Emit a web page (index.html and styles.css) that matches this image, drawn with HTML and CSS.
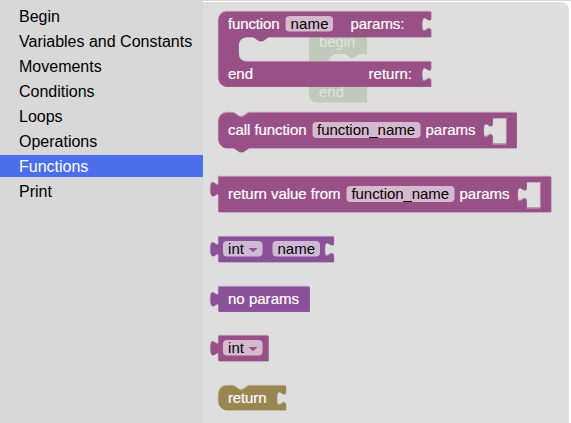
FILE: index.html
```html
<!DOCTYPE html>
<html lang="en">
<head>
<meta charset="utf-8">
<title>Block toolbox</title>
<link rel="stylesheet" href="styles.css">
</head>
<body>
<div class="workspace">
  <nav class="toolbox">
    <ul class="categories">
      <li>Begin</li>
      <li>Variables and Constants</li>
      <li>Movements</li>
      <li>Conditions</li>
      <li>Loops</li>
      <li>Operations</li>
      <li class="selected">Functions</li>
      <li>Print</li>
    </ul>
  </nav>
  <main class="flyout">
    <svg class="canvas" viewBox="203 2 366 421" width="366" height="421">
      <defs>
        <path id="define" d="M0,8 a8,8 0 0 1 8,-8 H212 v5 c0,10 -9,-8 -9,7.500 s9,-2.500 9,7.500 v5 H49.500 l-6,4 -3,0 -6,-4 h-7 a8,8 0 0 0 -8,8 v9 a8,8 0 0 0 8,8 H212 v5 c0,10 -9,-8 -9,7.500 s9,-2.500 9,7.500 v4.500 H8 a8,8 0 0 1 -8,-8 z"/>
        <path id="call" fill-rule="evenodd" d="M0,8 a8,8 0 0 1 8,-8 H15 l6,4 3,0 6,-4 H297.500 v35 H30 l-6,4 -3,0 -6,-4 H8 a8,8 0 0 1 -8,-8 z M273.500,5 v5 c0,10 -9,-8 -9,7.500 s9,-2.500 9,7.500 v6.500 h14.500 v-26.500 z"/>
        <path id="result" fill-rule="evenodd" d="M0,0 H332 v35 H0 V20 c0,-10 -8,8 -8,-7.500 s8,2.500 8,-7.500 z M307.500,5 v5 c0,10 -9,-8 -9,7.500 s9,-2.500 9,7.500 v6.500 h14.500 v-26.500 z"/>
        <path id="param" d="M0,0 H114.700 v5 c0,10 -9,-8 -9,7.500 s9,-2.500 9,7.500 v5 H0 V20 c0,-10 -8,8 -8,-7.500 s8,2.500 8,-7.500 z"/>
        <path id="empty" d="M0,0 H90.500 v24.500 H0 V20 c0,-10 -8,8 -8,-7.500 s8,2.500 8,-7.500 z"/>
        <path id="type" d="M0,0 H49.300 v25 H0 V20 c0,-10 -8,8 -8,-7.500 s8,2.500 8,-7.500 z"/>
        <path id="return" d="M0,8 a8,8 0 0 1 8,-8 H15 l6,4 3,0 6,-4 H66.800 v5 c0,10 -9,-8 -9,7.500 s9,-2.500 9,7.500 v4 H8 a8,8 0 0 1 -8,-8 z"/>
      </defs>

      <g class="ghost">
        <path d="M309,37 H367 V54 H360 l-6,4 -3,0 -6,-4 h-8 a8,8 0 0 0 -8,8 H367 V102.500 H317 a8,8 0 0 1 -8,-8 z"/>
        <text x="319" y="46.500" textLength="36">begin</text>
        <text x="319" y="96.500" textLength="25">end</text>
      </g>

      <g class="block magenta" transform="translate(218.500 11.500)">
        <use class="shade" href="#define" x=".5" y=".5"/><use class="light" href="#define" x="-.2" y="-.2"/><use class="face" href="#define" x=".2" y=".4"/>
        <rect class="field" x="67" y="4.500" width="47.500" height="15.500" rx="4"/>
        <text x="9.500" y="17.500" textLength="51.500">function</text>
        <text class="value" x="72" y="17.500" textLength="38">name</text>
        <text x="132" y="17.500" textLength="54">params:</text>
        <text x="9.500" y="67.500" textLength="25">end</text>
        <text x="150" y="67.500" textLength="43.500">return:</text>
      </g>

      <g class="block magenta" transform="translate(218.500 112.500)">
        <use class="shade" href="#call" x=".5" y=".5"/><use class="light" href="#call" x="-.2" y="-.2"/><use class="face" href="#call" x=".2" y=".4"/>
        <path class="rim" d="M273.500,31.500 h14.500 v-26.500"/>
        <rect class="field" x="94" y="9.500" width="108" height="16" rx="4"/>
        <text x="9.500" y="22.500" textLength="78.500">call function</text>
        <text class="value" x="98.500" y="22.500" textLength="98">function_name</text>
        <text x="207" y="22.500" textLength="50">params</text>
      </g>

      <g class="block magenta" transform="translate(218.500 176.500)">
        <use class="shade" href="#result" x=".5" y=".5"/><use class="light" href="#result" x="-.2" y="-.2"/><use class="face" href="#result" x=".2" y=".4"/>
        <path class="rim" d="M307.500,31.500 h14.500 v-26.500"/>
        <rect class="field" x="128" y="9.500" width="108" height="16" rx="4"/>
        <text x="9.500" y="22.500" textLength="112.500">return value from</text>
        <text class="value" x="133" y="22.500" textLength="97.500">function_name</text>
        <text x="241" y="22.500" textLength="50">params</text>
      </g>

      <g class="block purple" transform="translate(218.500 236.500)">
        <use class="shade" href="#param" x=".5" y=".5"/><use class="light" href="#param" x="-.2" y="-.2"/><use class="face" href="#param" x=".2" y=".4"/>
        <rect class="field" x="4.500" y="4.500" width="39.500" height="15.500" rx="4"/>
        <rect class="field" x="54" y="4.500" width="47.500" height="15.500" rx="4"/>
        <text class="value" x="9.500" y="17.500" textLength="16">int</text>
        <path class="arrow" d="M30,11.500 h9 l-4.500,4.200 z"/>
        <text class="value" x="59" y="17.500" textLength="37.500">name</text>
      </g>

      <g class="block purple" transform="translate(218.500 286.500)">
        <use class="shade" href="#empty" x=".5" y=".5"/><use class="light" href="#empty" x="-.2" y="-.2"/><use class="face" href="#empty" x=".2" y=".4"/>
        <text x="9.500" y="17.500" textLength="71">no params</text>
      </g>

      <g class="block magenta" transform="translate(218.500 335.500)">
        <use class="shade" href="#type" x=".5" y=".5"/><use class="light" href="#type" x="-.2" y="-.2"/><use class="face" href="#type" x=".2" y=".4"/>
        <rect class="field" x="4.500" y="4.500" width="39.500" height="15.500" rx="4"/>
        <text class="value" x="9.500" y="17.500" textLength="16">int</text>
        <path class="arrow" d="M30,11.500 h9 l-4.500,4.200 z"/>
      </g>

      <g class="block olive" transform="translate(218.500 385.500)">
        <use class="shade" href="#return" x=".5" y=".5"/><use class="light" href="#return" x="-.2" y="-.2"/><use class="face" href="#return" x=".2" y=".4"/>
        <text x="9.500" y="17.500" textLength="38.500">return</text>
      </g>
    </svg>
  </main>
</div>
</body>
</html>
```
FILE: styles.css
```css
* { box-sizing: border-box; }

body {
  margin: 0;
  background: #fff;
  font-family: "Liberation Sans", Arial, sans-serif;
}

.workspace {
  display: flex;
  height: 423px;
  overflow: hidden;
  border-top: 1px solid #d5d9d6;
}

.toolbox {
  width: 203px;
  background: #d8d8d8;
  color: #000;
  font-size: 16px;
}

.categories {
  display: flex;
  flex-direction: column;
  gap: 3px;
  margin: 0;
  padding: 4px 0 0;
  list-style: none;
}

.categories li {
  height: 22px;
  padding-left: 19px;
  line-height: 24px;
  white-space: nowrap;
}

.categories .selected {
  background: #4b6fec;
  color: #fff;
}

.flyout {
  width: 366px;
  margin-top: 1px;
  background: #dedede;
  border-top-right-radius: 8px;
}

.canvas {
  display: block;
  font-size: 15px;
}

.block text { fill: #fff; stroke: #fff; stroke-width: .2px; }
.block text.value { fill: #000; stroke: none; }
.face { fill: var(--face); }
.shade { fill: var(--shade); stroke: var(--shade); stroke-width: .6px; }
.light { fill: var(--light); stroke: var(--light); stroke-width: .6px; }
.rim { fill: none; stroke: var(--light); stroke-width: 1px; }
.field { fill: #fff; fill-opacity: .6; }
.arrow { fill: var(--face); }

.magenta { --face: #995086; --shade: #7a406b; --light: #b885aa; }
.purple { --face: #8a5199; --shade: #6e417a; --light: #ad86b8; }
.olive { --face: #998650; --shade: #7a6b40; --light: #b8aa85; }

.ghost path { fill: #c0cabb; }
.ghost text { fill: #e0e5de; }
```
